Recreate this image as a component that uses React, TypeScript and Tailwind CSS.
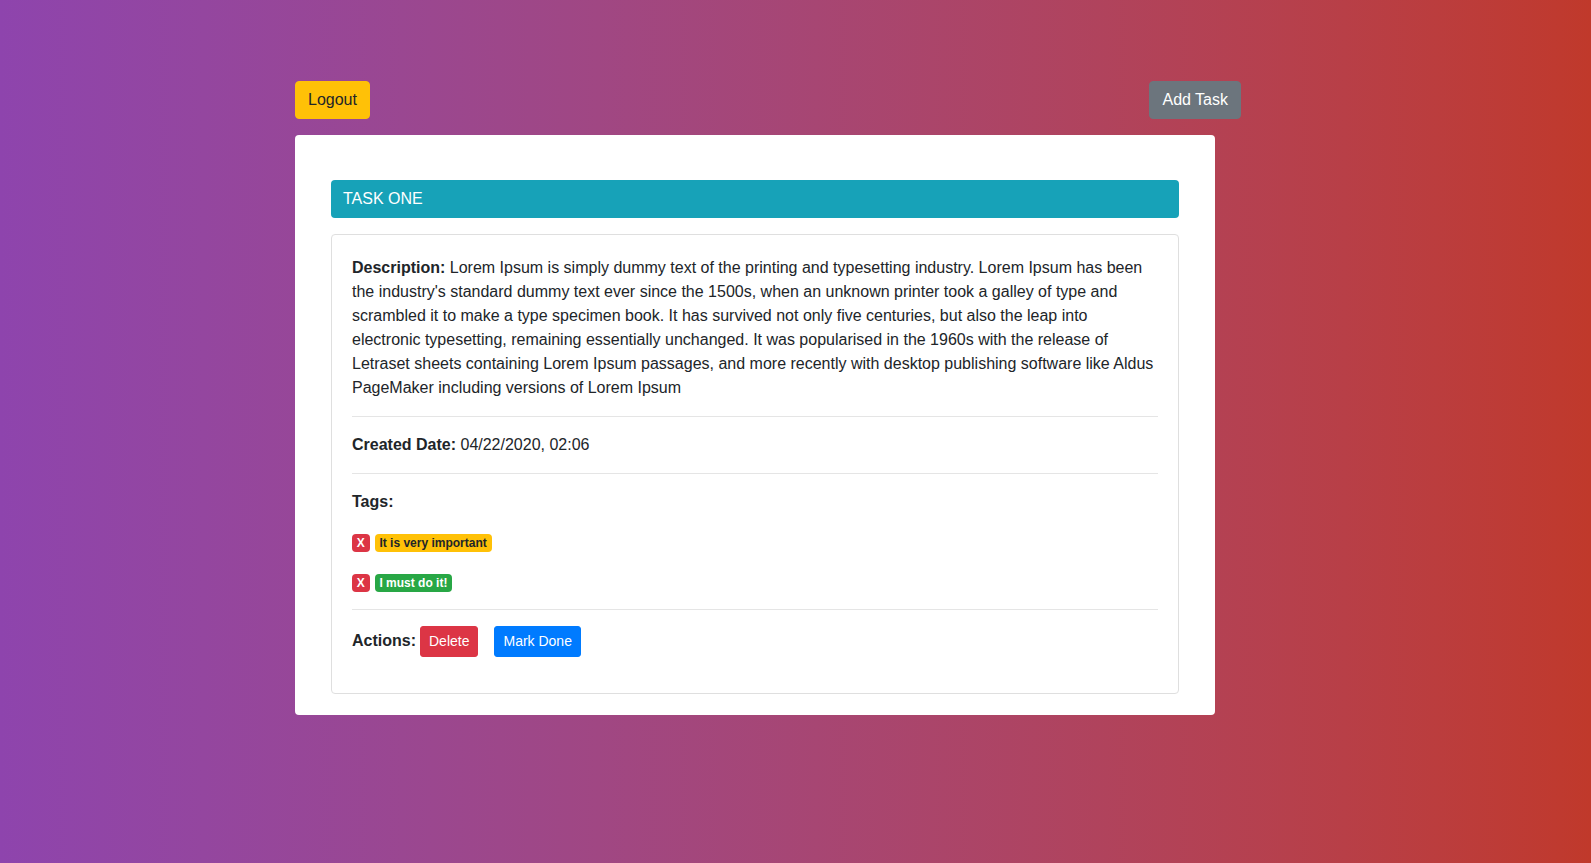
import React from 'react';

type Tag = { id: number; label: string; tone: 'warning' | 'success' };

const tags: Tag[] = [
  { id: 1, label: 'It is very important', tone: 'warning' },
  { id: 2, label: 'I must do it!', tone: 'success' },
];

const description =
  "Lorem Ipsum is simply dummy text of the printing and typesetting industry. Lorem Ipsum has been the industry's standard dummy text ever since the 1500s, when an unknown printer took a galley of type and scrambled it to make a type specimen book. It has survived not only five centuries, but also the leap into electronic typesetting, remaining essentially unchanged. It was popularised in the 1960s with the release of Letraset sheets containing Lorem Ipsum passages, and more recently with desktop publishing software like Aldus PageMaker including versions of Lorem Ipsum";

function TagRow({ tag }: { tag: Tag }) {
  const toneClass =
    tag.tone === 'warning' ? 'bg-[#ffc107] text-[#212529]' : 'bg-[#28a745] text-white';
  return (
    <div className="flex items-center h-[18px] gap-[5px]">
      <button className="h-[18px] px-[4.8px] rounded-[4px] bg-[#dc3545] text-white text-[12px] font-bold leading-[12px]">
        X
      </button>
      <span className={`h-[18px] flex items-center px-[4.8px] rounded-[4px] text-[12px] font-bold leading-[12px] ${toneClass}`}>
        {tag.label}
      </span>
    </div>
  );
}

export default function App() {
  return (
    <div
      className="min-h-[863px] w-full bg-gradient-to-r from-[#8e44ad] to-[#c0392b] pt-[81px] text-[#212529] text-[16px] leading-6"
      style={{ fontFamily: '"Liberation Sans", Arial, sans-serif' }}
    >
      <div className="ml-[295px] w-[946px]">
        {/* top actions */}
        <div className="flex justify-between">
          <button className="h-[38px] px-3 rounded-[4px] border border-[#ffc107] bg-[#ffc107] text-[#212529]">
            Logout
          </button>
          <button className="h-[38px] px-3 rounded-[4px] border border-[#6c757d] bg-[#6c757d] text-white">
            Add Task
          </button>
        </div>

        {/* task card */}
        <div className="mt-4 w-[920px] bg-white rounded-[4px] pt-[45px] pb-[21px] px-9">
          <div className="h-[38px] flex items-center px-3 rounded-[4px] bg-[#17a2b8] text-white">TASK ONE</div>

          <div className="mt-4 border border-[#dfdfdf] rounded-[4px] px-5 pt-[21px] pb-5">
            <p>
              <b>Description:</b> {description}
            </p>
            <hr className="my-4 border-t border-[#e5e5e5]" />
            <p>
              <b>Created Date:</b> 04/22/2020, 02:06
            </p>
            <hr className="my-4 border-t border-[#e5e5e5]" />
            <p className="font-bold">Tags:</p>
            <div className="mt-5 flex flex-col gap-[22px]">
              {tags.map((tag) => (
                <TagRow key={tag.id} tag={tag} />
              ))}
            </div>
            <hr className="mt-[17px] mb-4 border-t border-[#e5e5e5]" />
            <div className="flex items-baseline mb-4">
              <span className="font-bold mr-[4px]">Actions:</span>
              <button className="h-[31px] px-2 rounded-[3px] border border-[#dc3545] bg-[#dc3545] text-white text-[14px] leading-[21px]">
                Delete
              </button>
              <button className="ml-4 h-[31px] px-2 rounded-[3px] border border-[#007bff] bg-[#007bff] text-white text-[14px] leading-[21px]">
                Mark Done
              </button>
            </div>
          </div>
        </div>
      </div>
    </div>
  );
}
